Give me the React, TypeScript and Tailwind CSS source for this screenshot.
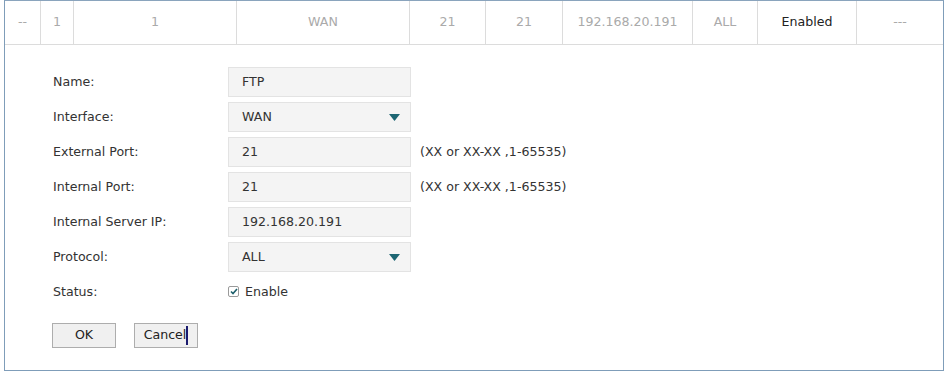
import React from 'react';

const cols = [
  { w: 'w-[35px]', text: '--', dark: false, first: true },
  { w: 'w-[33px]', text: '1', dark: false },
  { w: 'w-[163px]', text: '1', dark: false },
  { w: 'w-[173px]', text: 'WAN', dark: false },
  { w: 'w-[76px]', text: '21', dark: false },
  { w: 'w-[77px]', text: '21', dark: false },
  { w: 'w-[130px]', text: '192.168.20.191', dark: false },
  { w: 'w-[65px]', text: 'ALL', dark: false },
  { w: 'w-[99px]', text: 'Enabled', dark: true },
  { w: 'w-[87px]', text: '---', dark: false },
];

const Arrow = () => (
  <svg width="11" height="7" viewBox="0 0 11 7" className="ml-auto mr-[10px]">
    <path d="M0 0h11L5.5 7z" fill="#1d6673" />
  </svg>
);

const Field = ({ value, select }: { value: string; select?: boolean }) => (
  <div className="flex items-center w-[183px] h-[30px] bg-[#f4f4f4] border border-[#e3e3e3] pl-[13px] text-[#333]">
    <span>{value}</span>
    {select && <Arrow />}
  </div>
);

const Row = ({ label, children }: { label: string; children: React.ReactNode }) => (
  <div className="flex items-center h-[30px] mb-[5px]">
    <div className="w-[175px] text-[#333]">{label}</div>
    {children}
  </div>
);

const Hint = () => <span className="ml-[9px] text-[#333]">(XX or XX-XX ,1-65535)</span>;

export default function App() {
  return (
    <div className="w-[948px] h-[375px] bg-white text-[12.6px] font-['DejaVu_Sans','Liberation_Sans',sans-serif]">
      <div className="ml-[4px] w-[940px] h-[371px] border border-[#7f9db9] border-t-[#8aa4bd]">
        {/* Table row */}
        <div className="flex h-[44px] border-b border-[#dcdcdc]">
          {cols.map((c, i) => (
            <div
              key={i}
              className={`${c.w} flex items-center justify-center ${c.first ? '' : 'border-l border-[#dcdcdc]'} ${c.dark ? 'text-[#222]' : 'text-[#aaa]'}`}
            >
              {c.text}
            </div>
          ))}
        </div>

        {/* Edit form */}
        <div className="pl-[48px] pt-[22px]">
          <Row label="Name:">
            <Field value="FTP" />
          </Row>
          <Row label="Interface:">
            <Field value="WAN" select />
          </Row>
          <Row label="External Port:">
            <Field value="21" />
            <Hint />
          </Row>
          <Row label="Internal Port:">
            <Field value="21" />
            <Hint />
          </Row>
          <Row label="Internal Server IP:">
            <Field value="192.168.20.191" />
          </Row>
          <Row label="Protocol:">
            <Field value="ALL" select />
          </Row>
          <Row label="Status:">
            <label className="flex items-center text-[#333]">
              <span className="flex items-center justify-center w-[11px] h-[11px] border border-[#9a9a9a] bg-white rounded-[2px]">
                <svg width="8" height="7" viewBox="0 0 8 7">
                  <path d="M1 3.5l2 2L7 1" stroke="#1d5f6b" strokeWidth="1.6" fill="none" />
                </svg>
              </span>
              <span className="ml-[6px]">Enable</span>
            </label>
          </Row>

          <div className="flex gap-[18px] mt-[16px] -ml-[1px]">
            <button className="w-[64px] h-[25px] bg-[#f0f0f0] border border-[#adadad] text-[#222]">OK</button>
            <button className="w-[64px] h-[25px] bg-[#f0f0f0] border border-[#adadad] text-[#222] flex items-center justify-center">
              Cance<span className="border-r-2 border-[#1a1a6e]">l</span>
            </button>
          </div>
        </div>
      </div>
    </div>
  );
}
